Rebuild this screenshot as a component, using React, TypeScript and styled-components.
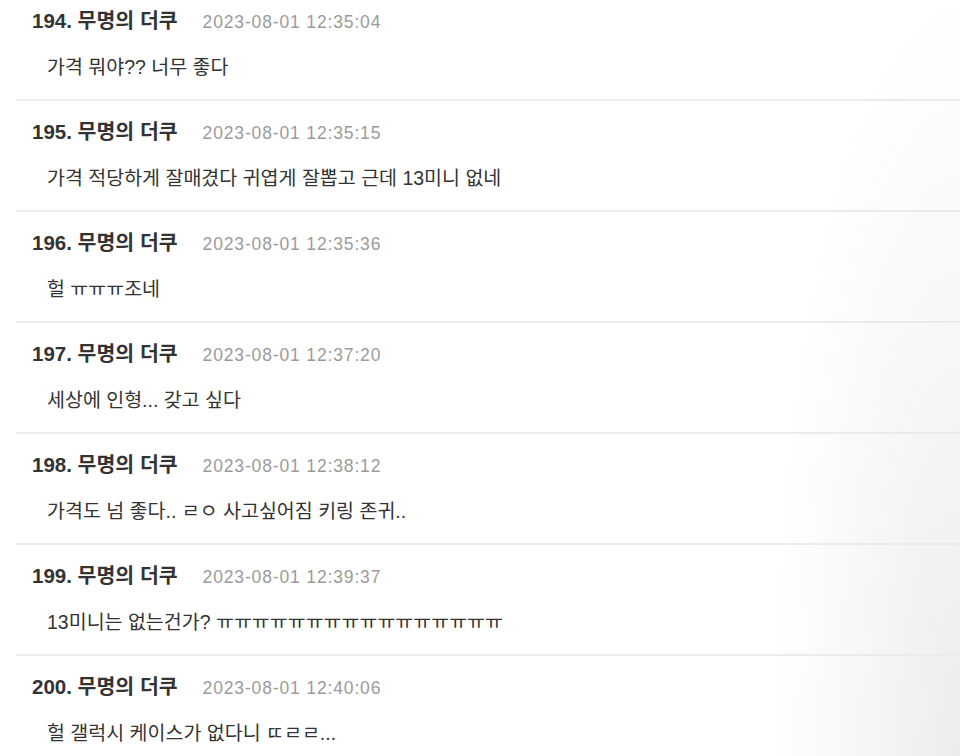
import React from "react";
import styled, { createGlobalStyle } from "styled-components";

const GlobalStyle = createGlobalStyle`
  html, body {
    margin: 0;
    padding: 0;
    height: 100%;
  }
  body {
    background-color: #ffffff;
    background-image: radial-gradient(
      ellipse 190px 780px at 100% 100%,
      rgba(0, 0, 0, 0.075) 0%,
      rgba(0, 0, 0, 0.03) 55%,
      rgba(0, 0, 0, 0) 100%
    );
    background-repeat: no-repeat;
    background-attachment: fixed;
    font-family: "Liberation Sans", "Noto Sans CJK KR", sans-serif;
    color: #333333;
    overflow: hidden;
  }
`;

const Page = styled.div`
  width: 960px;
  height: 756px;
  overflow: hidden;
`;

const List = styled.ul`
  list-style: none;
  margin: 0;
  padding: 0 0 0 16px;
`;

const Item = styled.li`
  display: flex;
  flex-direction: column;
  gap: 22px;
  padding: 19px 0 20px 16px;
  border-bottom: 2px solid #ebebeb;

  &:first-child {
    padding-top: 9px;
  }
`;

const Header = styled.div`
  display: flex;
  align-items: baseline;
  gap: 25px;
  height: 24px;
  line-height: 24px;
`;

const Author = styled.span`
  font-size: 20.5px;
  font-weight: 700;
  color: #333333;
`;

const DateText = styled.span`
  font-size: 17.5px;
  letter-spacing: 0.85px;
  color: #9b9b9b;
`;

const Body = styled.p`
  margin: 0 0 0 15px;
  font-size: 19.5px;
  line-height: 24px;
  color: #333333;
`;

type Comment = { no: number; date: string; text: string };

const comments: Comment[] = [
  { no: 194, date: "2023-08-01 12:35:04", text: "가격 뭐야?? 너무 좋다" },
  { no: 195, date: "2023-08-01 12:35:15", text: "가격 적당하게 잘매겼다 귀엽게 잘뽑고 근데 13미니 없네" },
  { no: 196, date: "2023-08-01 12:35:36", text: "헐 ㅠㅠㅠ조네" },
  { no: 197, date: "2023-08-01 12:37:20", text: "세상에 인형... 갖고 싶다" },
  { no: 198, date: "2023-08-01 12:38:12", text: "가격도 넘 좋다.. ㄹㅇ 사고싶어짐 키링 존귀.." },
  { no: 199, date: "2023-08-01 12:39:37", text: "13미니는 없는건가? ㅠㅠㅠㅠㅠㅠㅠㅠㅠㅠㅠㅠㅠㅠㅠㅠ" },
  { no: 200, date: "2023-08-01 12:40:06", text: "헐 갤럭시 케이스가 없다니 ㄸㄹㄹ..." },
];

export default function App() {
  return (
    <Page>
      <GlobalStyle />
      <List>
        {comments.map((c) => (
          <Item key={c.no}>
            <Header>
              <Author>{c.no}. 무명의 더쿠</Author>
              <DateText>{c.date}</DateText>
            </Header>
            <Body>{c.text}</Body>
          </Item>
        ))}
      </List>
    </Page>
  );
}
